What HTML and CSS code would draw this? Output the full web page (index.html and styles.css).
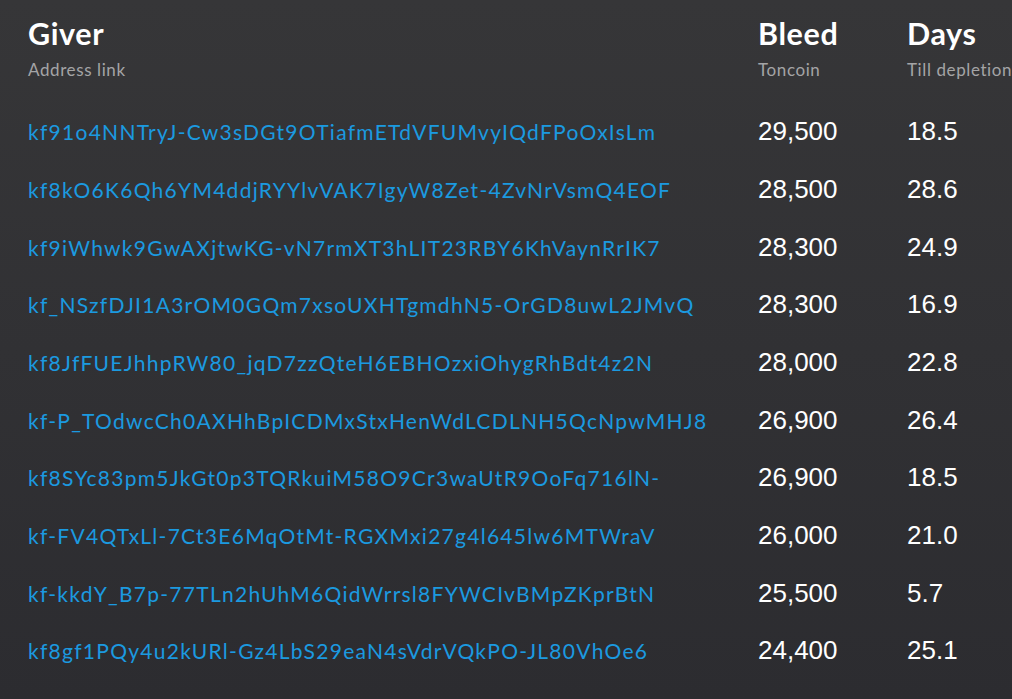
FILE: index.html
```html
<!DOCTYPE html>
<html lang="en">
<head>
<meta charset="utf-8">
<title>Givers</title>
<link rel="stylesheet" href="styles.css">
</head>
<body>
<div class="board">
  <div class="row head">
    <div class="cell"><div class="title">Giver</div><div class="sub">Address link</div></div>
    <div class="cell"><div class="title">Bleed</div><div class="sub">Toncoin</div></div>
    <div class="cell"><div class="title">Days</div><div class="sub">Till depletion</div></div>
  </div>
  <div class="row"><a class="addr" href="#">kf91o4NNTryJ-Cw3sDGt9OTiafmETdVFUMvyIQdFPoOxIsLm</a><span class="num">29,500</span><span class="num">18.5</span></div>
  <div class="row"><a class="addr" href="#">kf8kO6K6Qh6YM4ddjRYYlvVAK7IgyW8Zet-4ZvNrVsmQ4EOF</a><span class="num">28,500</span><span class="num">28.6</span></div>
  <div class="row"><a class="addr" href="#">kf9iWhwk9GwAXjtwKG-vN7rmXT3hLIT23RBY6KhVaynRrIK7</a><span class="num">28,300</span><span class="num">24.9</span></div>
  <div class="row"><a class="addr" href="#">kf_NSzfDJI1A3rOM0GQm7xsoUXHTgmdhN5-OrGD8uwL2JMvQ</a><span class="num">28,300</span><span class="num">16.9</span></div>
  <div class="row"><a class="addr" href="#">kf8JfFUEJhhpRW80_jqD7zzQteH6EBHOzxiOhygRhBdt4z2N</a><span class="num">28,000</span><span class="num">22.8</span></div>
  <div class="row"><a class="addr" href="#">kf-P_TOdwcCh0AXHhBpICDMxStxHenWdLCDLNH5QcNpwMHJ8</a><span class="num">26,900</span><span class="num">26.4</span></div>
  <div class="row"><a class="addr" href="#">kf8SYc83pm5JkGt0p3TQRkuiM58O9Cr3waUtR9OoFq716lN-</a><span class="num">26,900</span><span class="num">18.5</span></div>
  <div class="row"><a class="addr" href="#">kf-FV4QTxLl-7Ct3E6MqOtMt-RGXMxi27g4l645lw6MTWraV</a><span class="num">26,000</span><span class="num">21.0</span></div>
  <div class="row"><a class="addr" href="#">kf-kkdY_B7p-77TLn2hUhM6QidWrrsl8FYWCIvBMpZKprBtN</a><span class="num">25,500</span><span class="num">5.7</span></div>
  <div class="row"><a class="addr" href="#">kf8gf1PQy4u2kURl-Gz4LbS29eaN4sVdrVQkPO-JL80VhOe6</a><span class="num">24,400</span><span class="num">25.1</span></div>
</div>
</body>
</html>
```
FILE: styles.css
```css
html, body {
  margin: 0;
  height: 100%;
}
body {
  background: linear-gradient(#363638, #2c2c30);
  font-family: "Lato", "Liberation Sans", sans-serif;
  color: #ffffff;
  overflow: hidden;
}
.board {
  padding: 15px 0 0 28px;
}
.row {
  display: grid;
  grid-template-columns: 730px 149px 1fr;
  height: 57.67px;
  align-items: center;
}
.row.head {
  height: 88px;
  align-items: start;
}
.title {
  font-weight: 700;
  font-size: 30.5px;
  line-height: 36px;
  letter-spacing: 0.6px;
}
.sub {
  margin-top: 9px;
  font-size: 17px;
  line-height: 20px;
  letter-spacing: 0.6px;
  color: #a4a4a6;
  white-space: nowrap;
}
.addr {
  color: #1b9ae0;
  text-decoration: none;
  font-size: 21px;
  letter-spacing: 1.27px;
  white-space: nowrap;
}
.num {
  font-family: "Liberation Sans", "Lato", sans-serif;
  font-size: 26px;
  color: #ffffff;
}
```
